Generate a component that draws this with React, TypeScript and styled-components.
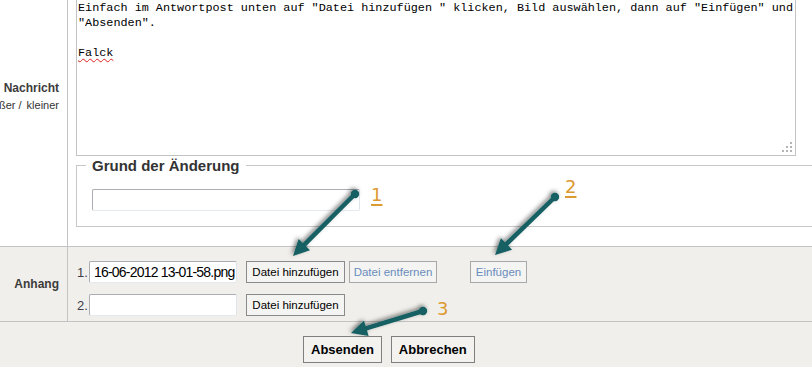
import styled, { createGlobalStyle } from "styled-components";

const lineColor = "#c3c3c3";
const panel = "#f0efeb";
const teal = "#135e62";

const GlobalStyle = createGlobalStyle`
  html, body {
    margin: 0;
    padding: 0;
    overflow: hidden;
    background: ${panel};
  }
  body {
    font-family: "Liberation Sans", Arial, sans-serif;
    color: #333;
  }
`;

type Pt = [number, number];

const arrows: { from: Pt; to: Pt }[] = [
  { from: [355, 194], to: [293, 256] },
  { from: [555, 197], to: [495, 255] },
  { from: [423, 311], to: [351, 333] },
];

const markers = [
  { label: "1", x: 371, y: 186, underline: true },
  { label: "2", x: 565, y: 178, underline: true },
  { label: "3", x: 437, y: 300, underline: false },
];

const Arrow = ({ from, to }: { from: Pt; to: Pt }) => {
  const dx = to[0] - from[0];
  const dy = to[1] - from[1];
  const len = Math.hypot(dx, dy);
  const ux = dx / len;
  const uy = dy / len;
  const head = 16;
  const half = 8;
  const bx = to[0] - ux * head;
  const by = to[1] - uy * head;
  const c1 = `${bx - uy * half},${by + ux * half}`;
  const c2 = `${bx + uy * half},${by - ux * half}`;
  return (
    <g>
      <line
        x1={from[0]}
        y1={from[1]}
        x2={bx + ux * 2}
        y2={by + uy * 2}
        stroke={teal}
        strokeWidth={4.5}
      />
      <circle cx={from[0]} cy={from[1]} r={4.2} fill={teal} />
      <polygon points={`${to[0]},${to[1]} ${c1} ${c2}`} fill={teal} />
    </g>
  );
};

export default function App() {
  return (
    <>
      <GlobalStyle />
      <Page>
        <Row $bg="#fff">
          <LabelCell $top={81}>
            <FieldLabel>Nachricht</FieldLabel>
            <SizeLinks>
              <span>größer /</span>
              <span>kleiner</span>
            </SizeLinks>
          </LabelCell>
          <MessageCell>
            <MessageBox>
              {'Einfach im Antwortpost unten auf "Datei hinzufügen " klicken, Bild auswählen, dann auf "Einfügen" und\n"Absenden".\n\n'}
              <Misspelled>Falck</Misspelled>
              <Grip width="12" height="12" viewBox="0 0 12 12">
                {[
                  [8, 1],
                  [4, 5],
                  [8, 5],
                  [0, 9],
                  [4, 9],
                  [8, 9],
                ].map(([x, y], i) => (
                  <rect key={i} x={x} y={y} width="2" height="2" fill="#b4b4b4" />
                ))}
              </Grip>
            </MessageBox>
            <Fieldset>
              <Legend>Grund der Änderung</Legend>
              <TextInput $w={268} />
            </Fieldset>
          </MessageCell>
        </Row>

        <Row $bg={panel}>
          <LabelCell $center>
            <FieldLabel>Anhang</FieldLabel>
          </LabelCell>
          <AttachCell>
            <AttachRow>
              <Num>1.</Num>
              <FileInput defaultValue="16-06-2012 13-01-58.png" />
              <Button $w={99} $gap={9}>Datei hinzufügen</Button>
              <Button $w={88} $gap={4} $disabled>
                Datei entfernen
              </Button>
              <Button $w={57} $gap={33} $disabled>
                Einfügen
              </Button>
            </AttachRow>
            <AttachRow>
              <Num>2.</Num>
              <FileInput />
              <Button $w={99} $gap={9}>Datei hinzufügen</Button>
            </AttachRow>
          </AttachCell>
        </Row>

        <BottomBar>
          <BigButton>Absenden</BigButton>
          <BigButton>Abbrechen</BigButton>
        </BottomBar>

        <Overlay width="812" height="367" viewBox="0 0 812 367">
          <defs>
            <filter id="shade" x="-20%" y="-20%" width="140%" height="140%">
              <feDropShadow dx="-1.5" dy="-1.5" stdDeviation="2" floodColor="#000" floodOpacity="0.5" />
            </filter>
          </defs>
          <g filter="url(#shade)">
            {arrows.map((a, i) => (
              <Arrow key={i} from={a.from} to={a.to} />
            ))}
          </g>
        </Overlay>
        {markers.map((m) => (
          <Marker key={m.label} $x={m.x} $y={m.y} $underline={m.underline}>
            {m.label}
          </Marker>
        ))}
      </Page>
    </>
  );
}

const Page = styled.div`
  position: relative;
  width: 812px;
  height: 367px;
  overflow: hidden;
  background: ${panel};
`;

const Row = styled.div<{ $bg: string }>`
  display: grid;
  grid-template-columns: 68px 1fr;
  background: ${(p) => p.$bg};
  border-bottom: 1px solid ${lineColor};
`;

const LabelCell = styled.div<{ $top?: number; $center?: boolean }>`
  display: flex;
  flex-direction: column;
  align-items: flex-end;
  justify-content: ${(p) => (p.$center ? "center" : "flex-start")};
  padding: ${(p) => p.$top ?? 0}px 8px 0 0;
  border-right: 1px solid ${lineColor};
  overflow: hidden;
  min-width: 0;
`;

const FieldLabel = styled.div`
  font-size: 12px;
  font-weight: bold;
  line-height: 14px;
  color: #3c3c3c;
  white-space: nowrap;
`;

const SizeLinks = styled.div`
  display: flex;
  gap: 5px;
  margin-top: 3px;
  font-size: 11px;
  line-height: 14px;
  color: #333;
  white-space: nowrap;
`;

const MessageCell = styled.div`
  padding: 0 0 19px 8px;
  min-width: 0;
`;

const MessageBox = styled.div`
  position: relative;
  box-sizing: border-box;
  width: 720px;
  height: 156px;
  padding: 1px 0 0 1px;
  border: 1px solid ${lineColor};
  border-top: 0;
  background: #fff;
  font-family: "Liberation Mono", "Courier New", monospace;
  font-size: 11.8px;
  line-height: 15px;
  color: #000;
  white-space: pre-wrap;
`;

const Misspelled = styled.span`
  text-decoration: underline wavy #e02020;
  text-decoration-thickness: 1px;
  text-underline-offset: 2px;
`;

const Grip = styled.svg`
  position: absolute;
  right: 1px;
  bottom: 2px;
`;

const Fieldset = styled.fieldset`
  margin: 1px 0 0;
  padding: 15px 15px 15px;
  width: 760px;
  min-width: 0;
  border: 1px solid #c8c8c8;
`;

const Legend = styled.legend`
  margin-left: -6px;
  padding: 0 6px;
  font-size: 15px;
  font-weight: bold;
  color: #333;
`;

const TextInput = styled.input<{ $w: number }>`
  display: block;
  box-sizing: border-box;
  width: ${(p) => p.$w}px;
  height: 22px;
  margin: 0;
  padding: 0 4px;
  border: 1px solid;
  border-color: #abadb3 #dfe3ea #e3e9ef #abadb3;
  border-radius: 2px;
  background: #fff;
  font-family: "Liberation Sans", Arial, sans-serif;
  font-size: 13px;
`;

const AttachCell = styled.div`
  display: flex;
  flex-direction: column;
  gap: 11px;
  padding: 14px 0 5px 9px;
`;

const AttachRow = styled.div`
  display: flex;
  align-items: center;
`;

const Num = styled.span`
  width: 12px;
  font-size: 13px;
  color: #3a3d4a;
`;

const FileInput = styled.input`
  box-sizing: border-box;
  width: 148px;
  height: 22px;
  margin: 0;
  padding: 0 0 0 4px;
  border: 1px solid;
  border-color: #abadb3 #dfe3ea #e3e9ef #abadb3;
  border-radius: 2px;
  background: #fff;
  color: #000;
  font-family: "Liberation Sans", Arial, sans-serif;
  font-size: 14px;
  letter-spacing: -0.8px;
`;

const Button = styled.button<{ $w: number; $gap: number; $disabled?: boolean }>`
  box-sizing: border-box;
  width: ${(p) => p.$w}px;
  height: 22px;
  margin: 0 0 0 ${(p) => p.$gap}px;
  padding: 0;
  border: 1px solid ${(p) => (p.$disabled ? "#a8a8a8" : "#8a8a8a")};
  border-radius: 0;
  background: #f4f4f2;
  color: ${(p) => (p.$disabled ? "#6a8dbd" : "#000")};
  font-family: "Liberation Sans", Arial, sans-serif;
  font-size: 11.5px;
  white-space: nowrap;
`;

const BottomBar = styled.div`
  display: flex;
  gap: 9px;
  padding: 14px 0 0 303px;
`;

const BigButton = styled.button`
  box-sizing: border-box;
  height: 27px;
  margin: 0;
  padding: 0 7px;
  border: 1px solid #7f7f7f;
  border-radius: 0;
  background: #f3f2ef;
  color: #000;
  font-family: "Liberation Sans", Arial, sans-serif;
  font-size: 13px;
  font-weight: bold;
`;

const Overlay = styled.svg`
  position: absolute;
  left: 0;
  top: 0;
  pointer-events: none;
`;

const Marker = styled.span<{ $x: number; $y: number; $underline: boolean }>`
  position: absolute;
  left: ${(p) => p.$x}px;
  top: ${(p) => p.$y}px;
  font-family: "DejaVu Sans", Verdana, sans-serif;
  font-size: 18px;
  line-height: 18px;
  color: #dc9a32;
  text-decoration: ${(p) => (p.$underline ? "underline" : "none")};
  text-decoration-thickness: 1.5px;
  text-underline-offset: 3px;
`;
